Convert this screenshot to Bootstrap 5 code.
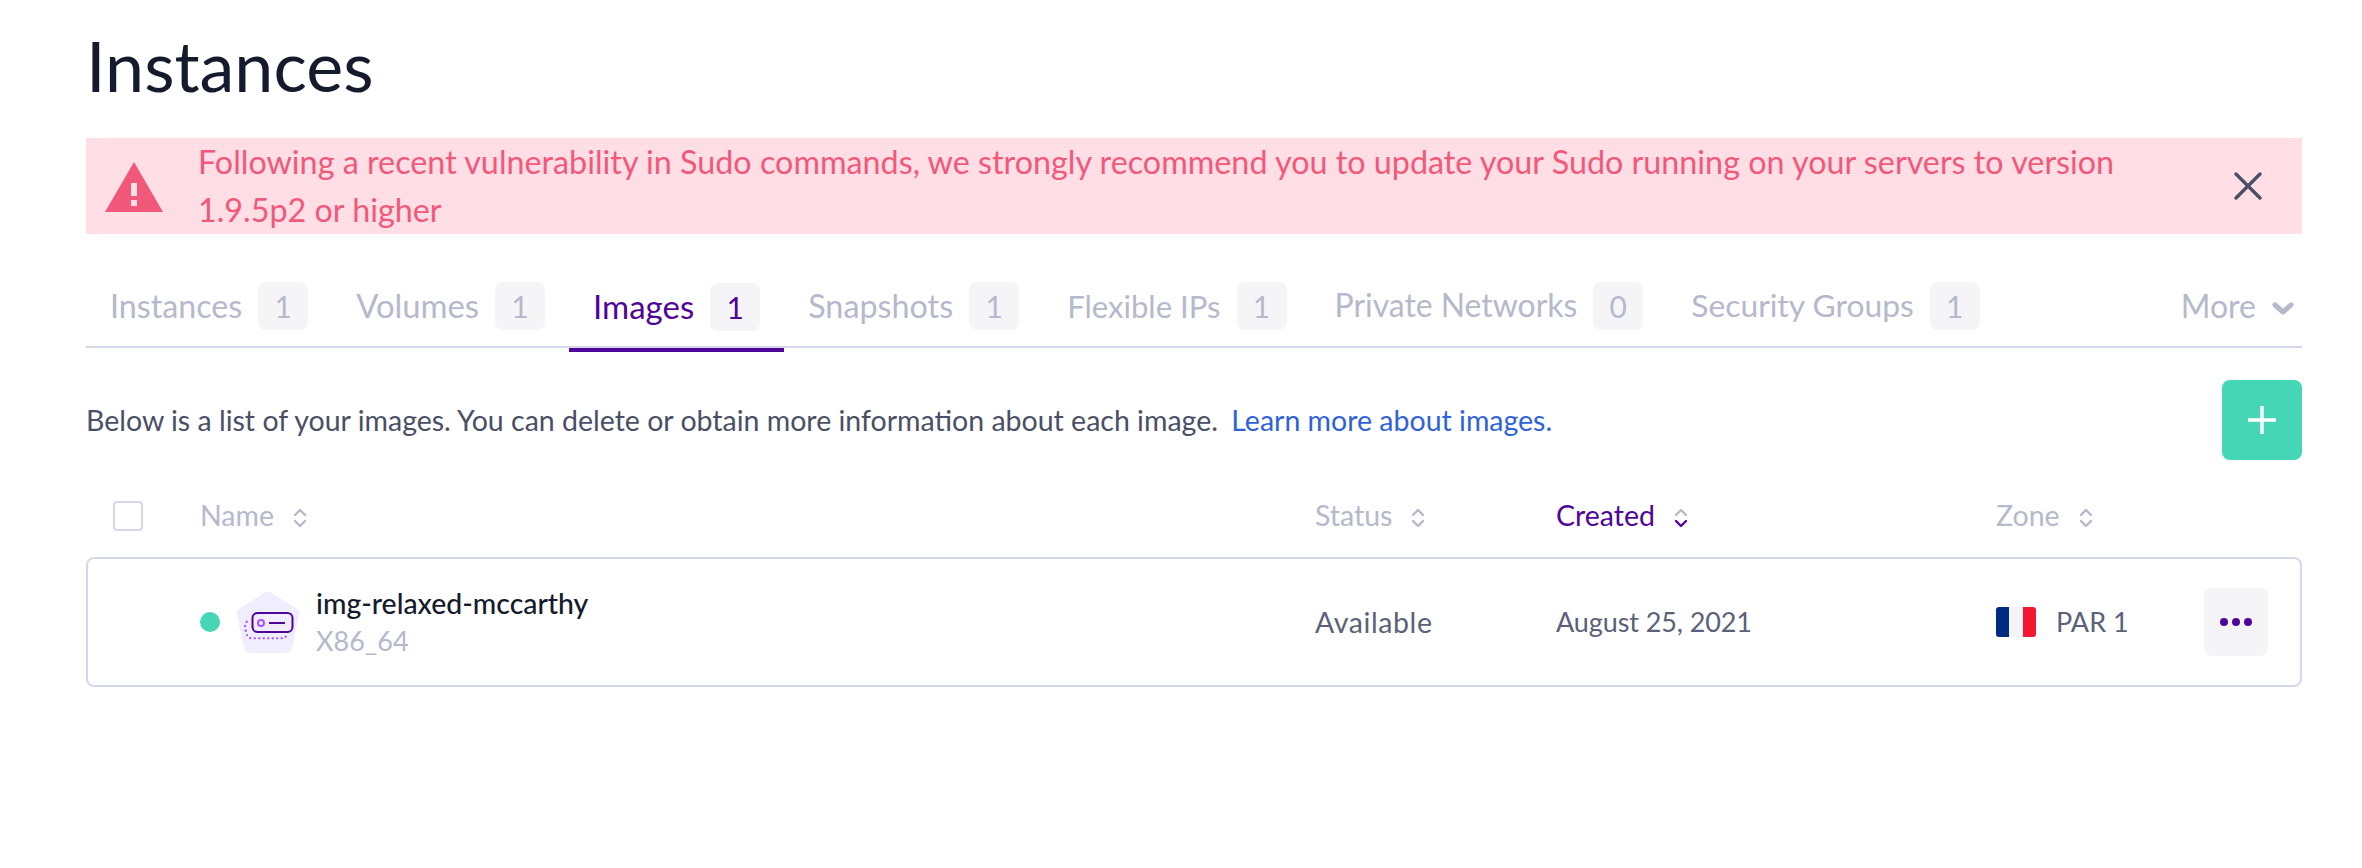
<!doctype html>
<html lang="en"><head><meta charset="utf-8"><title>Instances</title>
<link rel="stylesheet" href="https://cdn.jsdelivr.net/npm/bootstrap@5.3.0/dist/css/bootstrap.min.css">
<style>
body{font-family:"Lato","Noto Sans",sans-serif;background:#fff;color:#4a4f66;overflow:hidden}
.pg{padding:0 60px 0 86px;height:868px}
.ttl{font-size:70px;font-weight:400;line-height:80px;color:#151a2d;margin:0;padding-top:25px;height:138px}
.warn{height:96px;background:#ffdee5;color:#f2587a;font-size:32.300px;line-height:48px}
.warn-ic{width:112px;flex:none;padding-left:18px}
.warn-x{margin-left:auto;margin-right:40px;width:28px;height:28px;padding:0;border:0;background:none;display:flex}
.tabs{margin-top:48px;height:66px;border-bottom:2px solid #d4d8ea;font-size:32px}
.tb{display:flex;align-items:center;gap:16px;height:68px;padding:0 24px 20px;color:#b5b9cb;text-decoration:none}
.tb.on{color:#4f0599;border-bottom:4px solid #4f0599;height:70px;padding-bottom:16px;margin-bottom:-4px}
.tb-a{font-size:32.200px}.tb-b{font-size:32.800px}.tb-c{font-size:33px}.tb-d{font-size:32.300px}
.tb-e{font-size:31.100px}.tb-f{font-size:31.900px}.tb-g{font-size:31.800px}
.cnt{display:block;width:50px;height:48px;line-height:48px;text-align:center;border-radius:8px;background:#f5f5f8;font-size:30px}
.more{color:#b5b9cb;padding-right:8px;padding-bottom:17px;gap:16px}
.more svg{margin-top:6px}
.dsc{height:80px;margin-top:32px;font-size:28.500px;color:#4a4f66}
.dsc a{color:#2f62d9;text-decoration:none;margin-left:6px}
.add{width:80px;height:80px;padding:0;border:0;border-radius:8px;background:#45d6b5}
.add:hover{background:#45d6b5}
.gridr{display:grid;grid-template-columns:114px 1115px 241px 440px 1fr;align-items:center;font-size:27px}
.hd{height:97px;padding-top:14px;color:#b5b9cb;font-size:28.500px}
.hd .act{color:#4f0599}
.chk.form-check-input{width:30px;height:30px;margin:0 0 0 27px;border:2px solid #d4d8ea;border-radius:4px;display:block}
.srt{margin-left:19px;vertical-align:-2px}
.rw{height:130px;border:2px solid #d4d8ea;border-radius:8px;grid-template-columns:112px 1115px 241px 440px 1fr;color:#5b6178}
.nmc{display:flex;align-items:center;gap:16px}
.stat{width:20px;height:20px;border-radius:50%;background:#45d6b5;flex:none}
.nm{color:#151a2d;font-size:28.400px;font-weight:500;line-height:38px}
.ar{color:#b5b9cb;font-size:27px;line-height:38px}
.avl{font-size:28.500px;letter-spacing:.6px}
.dte{letter-spacing:-.1px}
.zn{display:flex;align-items:center;gap:20px}
.flg{width:40px;height:30px;border-radius:3px;display:flex;overflow:hidden;flex:none}
.flg i{flex:1;display:block}
.dots{width:64px;height:68px;padding:0;border:0;border-radius:8px;background:#f5f5f8;display:flex;align-items:center;justify-content:center;gap:4px}
.dots i{display:block;width:8px;height:8px;border-radius:50%;background:#4f0599}
.act-c{display:flex;justify-content:space-between;align-items:center;padding-right:32px}
</style></head><body>
<main class="pg">
<h1 class="ttl">Instances</h1>
<div class="alert warn d-flex align-items-center mb-0 rounded-0 p-0 border-0" role="alert">
 <div class="warn-ic"><svg width="60" height="52" viewBox="0 0 60 52"><path fill="#f2587a" d="M30 1 59 51H1Z"/><rect x="27" y="22" width="6" height="13" fill="#ffdee5"/><rect x="27" y="39" width="6" height="6" fill="#ffdee5"/></svg></div>
 <div>Following a recent vulnerability in Sudo commands, we strongly recommend you to update your Sudo running on your servers to version<br>1.9.5p2 or higher</div>
 <button class="warn-x" aria-label="Close"><svg width="28" height="28" viewBox="0 0 28 28"><path d="M2 2 26 26M26 2 2 26" stroke="#4a4f66" stroke-width="3.4" stroke-linecap="round" fill="none"/></svg></button>
</div>
<nav class="nav tabs flex-nowrap">
 <a class="tb tb-a" href="#">Instances <span class="cnt">1</span></a>
 <a class="tb tb-b" href="#">Volumes <span class="cnt">1</span></a>
 <a class="tb tb-c on" href="#">Images <span class="cnt">1</span></a>
 <a class="tb tb-d" href="#">Snapshots <span class="cnt">1</span></a>
 <a class="tb tb-e" href="#">Flexible IPs <span class="cnt">1</span></a>
 <a class="tb tb-f" href="#">Private Networks <span class="cnt">0</span></a>
 <a class="tb tb-g" href="#">Security Groups <span class="cnt">1</span></a>
 <div class="d-flex align-items-center ms-auto more">More <svg width="22" height="14" viewBox="0 0 22 14"><path d="M3 3 11 10 19 3" fill="none" stroke="#b5b9cb" stroke-width="5" stroke-linecap="round" stroke-linejoin="round"/></svg></div>
</nav>
<div class="d-flex justify-content-between align-items-center dsc">
 <div>Below is a list of your images. You can delete or obtain more information about each image. <a href="#">Learn more about images.</a></div>
 <button class="btn add" aria-label="Add"><svg width="28" height="28" viewBox="0 0 28 28"><path d="M14 0V28M0 14H28" stroke="#fff" stroke-width="3.4"/></svg></button>
</div>
<div class="gridr hd">
 <div><input class="form-check-input chk" type="checkbox" aria-label="Select all"></div>
 <div>Name<svg class="srt" width="14" height="20" viewBox="0 0 14 20"><path d="M2 7 7 2 12 7M2 13 7 18 12 13" fill="none" stroke="#b5b9cb" stroke-width="2.4" stroke-linecap="round" stroke-linejoin="round"/></svg></div>
 <div>Status<svg class="srt" width="14" height="20" viewBox="0 0 14 20"><path d="M2 7 7 2 12 7M2 13 7 18 12 13" fill="none" stroke="#b5b9cb" stroke-width="2.4" stroke-linecap="round" stroke-linejoin="round"/></svg></div>
 <div class="act">Created<svg class="srt" width="14" height="20" viewBox="0 0 14 20"><path d="M2 7 7 2 12 7" fill="none" stroke="#b5b9cb" stroke-width="2.4" stroke-linecap="round" stroke-linejoin="round"/><path d="M2 13 7 18 12 13" fill="none" stroke="#4f0599" stroke-width="2.4" stroke-linecap="round" stroke-linejoin="round"/></svg></div>
 <div>Zone<svg class="srt" width="14" height="20" viewBox="0 0 14 20"><path d="M2 7 7 2 12 7M2 13 7 18 12 13" fill="none" stroke="#b5b9cb" stroke-width="2.4" stroke-linecap="round" stroke-linejoin="round"/></svg></div>
</div>
<div class="gridr rw">
 <div></div>
 <div class="nmc">
  <span class="stat"></span>
  <svg width="64" height="62" viewBox="0 0 64 62" class="flex-none"><path fill="#efedfe" d="M29 1.500Q32 0 35 1.500L61 18Q64 20 63 24L56 57Q55 62 50 62H14Q9 62 8 57L1 24Q0 20 3 18Z"/><path d="M11.300 30Q8 34 9.700 39 10.500 47 16 47.300H47Q50 47 50.700 43" fill="none" stroke="#a855f7" stroke-width="2" stroke-dasharray="2 2.500"/><rect x="16.500" y="22" width="40" height="19" rx="5" fill="#efedfe" stroke="#4f0599" stroke-width="2"/><circle cx="25" cy="32" r="3" fill="none" stroke="#a855f7" stroke-width="2"/><path d="M33 32H49" stroke="#4f0599" stroke-width="2"/></svg>
  <div><div class="nm">img-relaxed-mccarthy</div><div class="ar">X86_64</div></div>
 </div>
 <div class="avl">Available</div>
 <div class="dte">August 25, 2021</div>
 <div class="act-c">
  <div class="zn"><span class="flg"><i style="background:#002a7f"></i><i style="background:#f4f4f8"></i><i style="background:#f31830"></i></span>PAR 1</div>
  <button class="btn dots" aria-label="More actions"><i></i><i></i><i></i></button>
 </div>
</div>
</main>
</body></html>
